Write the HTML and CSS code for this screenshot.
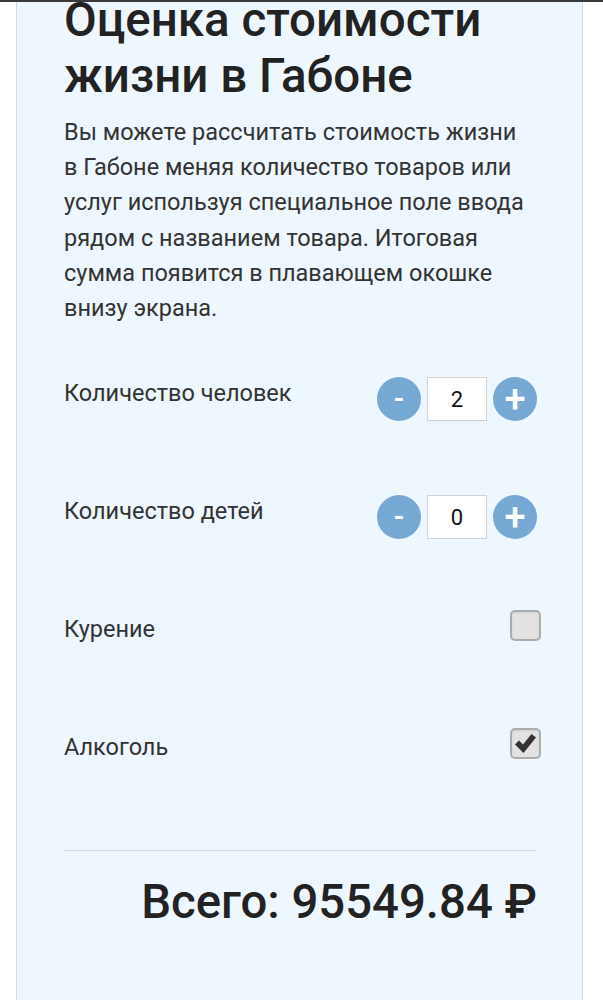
FILE: index.html
```html
<!DOCTYPE html>
<html lang="ru">
<head>
    <meta charset="UTF-8">
    <meta name="viewport" content="width=device-width, initial-scale=1.0">
    <title>Оценка стоимости жизни в Габоне</title>
    <link rel="stylesheet" href="styles.css">
</head>
<body>
    <div class="topbar"></div>
    <div class="card">
        <h1 class="title">Оценка стоимости жизни в Габоне</h1>
        <p class="intro">Вы можете рассчитать стоимость жизни в Габоне меняя количество товаров или услуг используя специальное поле ввода рядом с названием товара. Итоговая сумма появится в плавающем окошке внизу экрана.</p>

        <div class="rows">
            <div class="row">
                <div class="row-label">Количество человек</div>
                <div class="counter">
                    <button class="round-btn">-</button>
                    <input class="count" type="text" value="2">
                    <button class="round-btn plus">+</button>
                </div>
            </div>
            <div class="row">
                <div class="row-label">Количество детей</div>
                <div class="counter">
                    <button class="round-btn">-</button>
                    <input class="count" type="text" value="0">
                    <button class="round-btn plus">+</button>
                </div>
            </div>
            <div class="row">
                <div class="row-label">Курение</div>
                <div class="check"></div>
            </div>
            <div class="row">
                <div class="row-label">Алкоголь</div>
                <div class="check checked">
                    <svg width="23" height="21" viewBox="0 0 23 21">
                        <path d="M1 11.5 L5 7.5 L9 11.5 L17.5 1 L22 4.5 L9.5 20 Z" fill="#333"/>
                    </svg>
                </div>
            </div>
        </div>

        <div class="divider"></div>
        <div class="total">Всего: 95549.84 ₽</div>
    </div>
</body>
</html>
```

FILE: styles.css
```css
body {
    font-family: Roboto, "Noto Sans", sans-serif;
    margin: 0;
    padding: 0;
    background-color: #ffffff;
    color: #333;
}
.topbar {
    position: fixed;
    top: 0;
    left: 0;
    right: 0;
    height: 2px;
    background-color: #3a3a3a;
}
.card {
    margin: -30px 20px 0 16px;
    padding: 21px 45px 140px 47px;
    background-color: #eef6fe;
    border: 1px solid #d3d9df;
}
.title {
    margin: 0 0 11px;
    font-size: 47.5px;
    line-height: 56px;
    font-weight: 500;
    color: #222;
}
.intro {
    margin: 0 8px 0 0;
    font-size: 23.5px;
    line-height: 35.2px;
    color: #333;
}
.rows {
    display: flex;
    flex-direction: column;
    gap: 74px;
    margin-top: 51px;
}
.row {
    display: flex;
    justify-content: space-between;
    align-items: flex-start;
    height: 44px;
}
.row-label {
    font-size: 23.5px;
    line-height: 32px;
    color: #333;
}
.counter {
    display: flex;
    align-items: center;
    gap: 6px;
}
.round-btn {
    width: 44px;
    height: 44px;
    border: none;
    border-radius: 50%;
    background-color: #76a8d4;
    color: #fff;
    font-family: Roboto, sans-serif;
    font-size: 28px;
    font-weight: 700;
    line-height: 44px;
    padding: 0;
}
.round-btn.plus {
    font-size: 38px;
    font-weight: 500;
}
.count {
    box-sizing: border-box;
    width: 60px;
    height: 44px;
    border: 1px solid #cfd3d6;
    background: #fff;
    text-align: center;
    font-family: Roboto, sans-serif;
    font-size: 22px;
    color: #111;
    padding: 0;
}
.check {
    box-sizing: border-box;
    width: 31px;
    height: 31px;
    margin-top: -3px;
    margin-right: -4px;
    border: 2px solid #acacac;
    border-radius: 5px;
    background-color: #e2e2e2;
    box-shadow: inset 0 1px 2px rgba(0, 0, 0, 0.08);
    display: flex;
    align-items: center;
    justify-content: center;
}
.divider {
    margin-top: 75px;
    height: 1px;
    background-color: #d5dbe2;
}
.total {
    margin-top: 24px;
    text-align: right;
    font-size: 47.3px;
    line-height: 55px;
    font-weight: 500;
    color: #222;
}
```
